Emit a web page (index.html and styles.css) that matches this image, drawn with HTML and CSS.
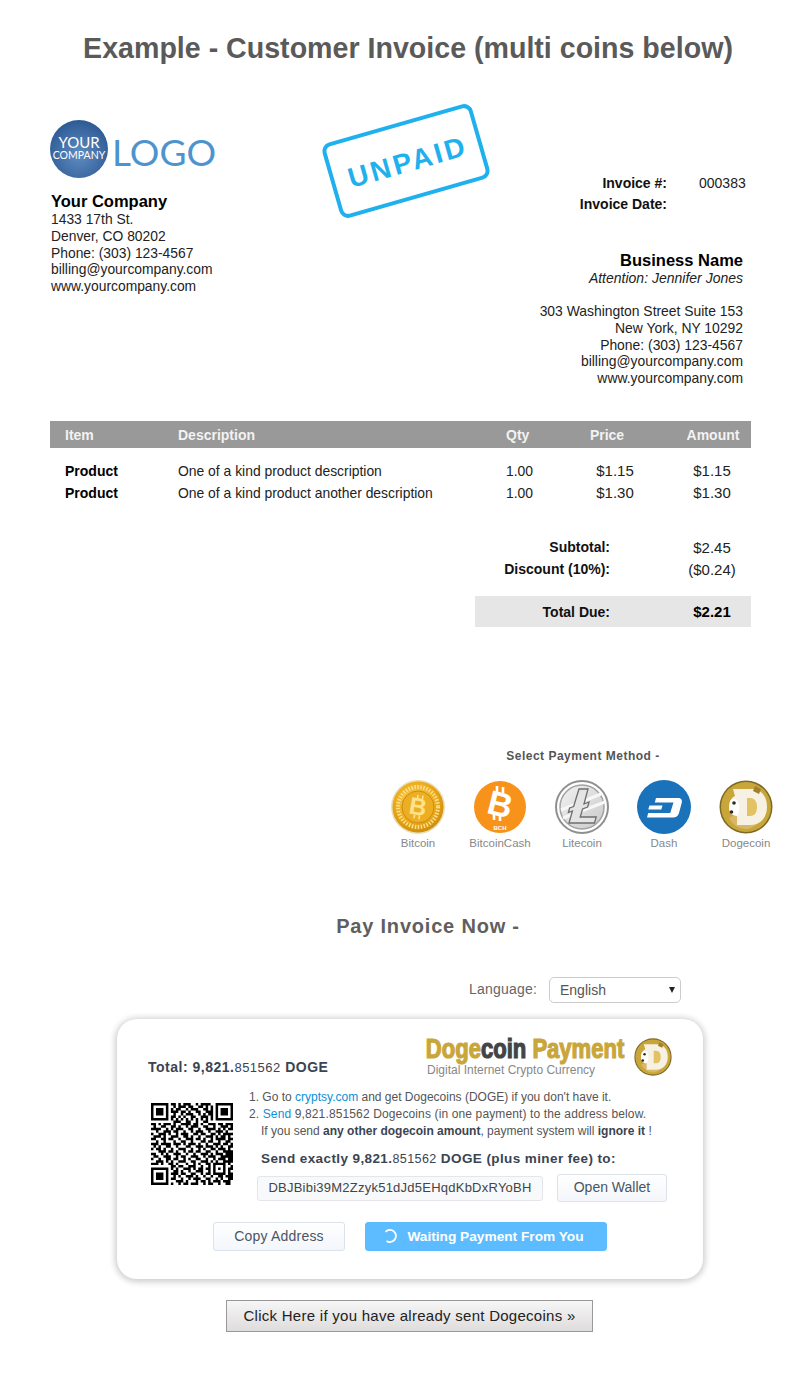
FILE: index.html
```html
<!DOCTYPE html>
<html lang="en">
  <head>
    <meta charset="UTF-8" />
    <title>Example - Customer Invoice</title>
    <link rel="stylesheet" href="styles.css">
  </head>
  <body>
    <svg class="defs" width="0" height="0">
      <defs>
        <radialGradient id="goldFill" cx="45%" cy="40%" r="65%">
          <stop offset="0" stop-color="#fbd566" />
          <stop offset="0.6" stop-color="#eeab1c" />
          <stop offset="1" stop-color="#c98608" />
        </radialGradient>
        <linearGradient id="silverFill" x1="0" y1="0" x2="1" y2="1">
          <stop offset="0" stop-color="#f2f2f2" />
          <stop offset="1" stop-color="#c9c9c9" />
        </linearGradient>
        <radialGradient id="logoFill" cx="50%" cy="60%" r="60%">
          <stop offset="0" stop-color="#5f8cc0" />
          <stop offset="1" stop-color="#2d5a94" />
        </radialGradient>
        <symbol id="dogeCoin" viewBox="0 0 54 54">
          <circle cx="27" cy="27" r="26.5" fill="#7d6a26" />
          <circle cx="27" cy="27" r="25" fill="#c9a63a" />
          <path d="M10 38c6-4 10-2 14-3s14-2 20-3c-2 9-9 17-17 17-7 0-13-4-17-11z" fill="#d8b768" />
          <path d="M14 9h18c11 0 16 8 16 18s-6 18-16 18h-14v-10c-4-1-7-4-7-9s2-9 5-10z" fill="#f6f1e2" />
          <path d="M28 18h3c5 0 7 4 7 9s-2 9-7 9h-3z" fill="#e3c266" />
          <path d="M13 19c3-1 6 1 7 5s0 9-2 12c-4 0-8-3-8-8s1-8 3-9z" fill="#fff" />
          <circle cx="15" cy="23" r="1.800" fill="#2e2a1e" />
          <circle cx="12.500" cy="32" r="1.800" fill="#2e2a1e" />
          <path d="M36 6l6 3-2 5-6-3z" fill="#a0802a" />
        </symbol>
      </defs>
    </svg>

    <h1 class="page-title">Example - Customer Invoice (multi coins below)</h1>

    <section class="invoice">
      <div class="invoice-head">
        <div class="company">
          <svg class="company-logo" width="170" height="60" viewBox="0 0 170 60">
            <circle cx="29" cy="29" r="29" fill="url(#logoFill)" />
            <text x="29" y="28" text-anchor="middle" class="logo-your">YOUR</text>
            <text x="29" y="39" text-anchor="middle" class="logo-company">COMPANY</text>
            <text x="62" y="46" class="logo-word">LOGO</text>
          </svg>
          <div class="company-name">Your Company</div>
          <div class="company-lines">
            1433 17th St.<br />
            Denver, CO 80202<br />
            Phone: (303) 123-4567<br />
            billing@yourcompany.com<br />
            www.yourcompany.com
          </div>
        </div>

        <svg class="stamp" width="170" height="116" viewBox="0 0 170 116">
          <g transform="rotate(-16 85 58)">
            <rect x="9" y="21" width="152" height="74" rx="7" fill="none" stroke="#1fb0ee" stroke-width="4" />
            <text x="85" y="69" text-anchor="middle" textLength="120" class="stamp-text">UNPAID</text>
          </g>
        </svg>

        <div class="bill-to">
          <div class="invoice-meta">
            <b>Invoice #:</b><span>000383</span>
            <b>Invoice Date:</b><span></span>
          </div>
          <div class="business-name">Business Name</div>
          <div class="attention">Attention: Jennifer Jones</div>
          <div class="business-lines">
            303 Washington Street Suite 153<br />
            New York, NY 10292<br />
            Phone: (303) 123-4567<br />
            billing@yourcompany.com<br />
            www.yourcompany.com
          </div>
        </div>
      </div>

      <table class="items">
        <thead>
          <tr>
            <th class="col-item">Item</th>
            <th class="col-desc">Description</th>
            <th class="col-qty">Qty</th>
            <th class="col-price">Price</th>
            <th class="col-amount">Amount</th>
          </tr>
        </thead>
        <tbody>
          <tr class="first-row">
            <td class="col-item">Product</td>
            <td class="col-desc">One of a kind product description</td>
            <td class="col-qty">1.00</td>
            <td class="col-price">$1.15</td>
            <td class="col-amount">$1.15</td>
          </tr>
          <tr>
            <td class="col-item">Product</td>
            <td class="col-desc">One of a kind product another description</td>
            <td class="col-qty">1.00</td>
            <td class="col-price">$1.30</td>
            <td class="col-amount">$1.30</td>
          </tr>
        </tbody>
      </table>

      <div class="totals">
        <div class="total-row"><b>Subtotal:</b><span>$2.45</span></div>
        <div class="total-row"><b>Discount (10%):</b><span>($0.24)</span></div>
        <div class="total-row total-due"><b>Total Due:</b><b>$2.21</b></div>
      </div>
    </section>

    <section class="payment-methods">
      <div class="payment-title">Select Payment Method -</div>
      <div class="coin-list">
        <div class="coin">
          <svg width="54" height="54" viewBox="0 0 54 54">
            <circle cx="27" cy="27" r="27" fill="#e8ddb0" />
            <circle cx="27" cy="27" r="25.5" fill="url(#goldFill)" />
            <circle cx="27" cy="27" r="20" fill="none" stroke="#fbe08a" stroke-width="4" stroke-dasharray="1.5 1.5" />
            <circle cx="27" cy="27" r="16" fill="#eeae24" stroke="#c98d12" />
            <text x="27" y="35" text-anchor="middle" transform="rotate(10 27 27)" class="coin-b btc-b">B</text>
            <path d="M25 15v4M30 15v4M25 35v4M30 35v4" stroke="#ffe28c" stroke-width="1.6" transform="rotate(10 27 27)" />
          </svg>
          <span>Bitcoin</span>
        </div>
        <div class="coin">
          <svg width="54" height="54" viewBox="0 0 54 54">
            <circle cx="27" cy="27" r="26" fill="#f7931a" />
            <text x="27" y="36" text-anchor="middle" transform="rotate(14 27 25)" class="coin-b bch-b">B</text>
            <path d="M24 6v6M30 7v6M21 34v6M27 35v6" stroke="#fff" stroke-width="2.6" />
            <text x="27" y="50" text-anchor="middle" class="bch-text">BCH</text>
          </svg>
          <span>BitcoinCash</span>
        </div>
        <div class="coin">
          <svg width="54" height="54" viewBox="0 0 54 54">
            <circle cx="27" cy="27" r="26" fill="#fff" stroke="#8f8f8f" stroke-width="2" />
            <circle cx="27" cy="27" r="22" fill="url(#silverFill)" stroke="#a2a2a2" stroke-width="1.5" />
            <path d="M6 30L46 14M8 38L50 22" stroke="#f7f7f7" stroke-width="3" />
            <path d="M24 9h9l-4 15 5-2-1.400 5-5 2-2.400 8h16l-1.700 6H14l3.400-12-4 1.500 1.200-4.500 4-1.500z" fill="#e4e4e4" stroke="#6e6e6e" stroke-width="1.300" />
          </svg>
          <span>Litecoin</span>
        </div>
        <div class="coin">
          <svg width="54" height="54" viewBox="0 0 54 54">
            <circle cx="27" cy="27" r="27" fill="#1a72bb" />
            <path d="M19 18h22c3 0 4.500 2 3.800 4.600l-2.800 10.300c-.8 3-3.200 4.600-6 4.600H10l1.200-4.400h22l3.300-10.700H17.800z" fill="#fff" />
            <path d="M12.500 25.500h13l-1.200 4H11.300z" fill="#fff" />
          </svg>
          <span>Dash</span>
        </div>
        <div class="coin">
          <svg width="54" height="54"><use href="#dogeCoin" /></svg>
          <span>Dogecoin</span>
        </div>
      </div>
    </section>

    <h2 class="pay-title">Pay Invoice Now -</h2>

    <div class="language-row">
      <label for="language">Language:</label>
      <div class="language-select">
        <select id="language">
          <option>English</option>
        </select>
      </div>
    </div>

    <section class="pay-card">
      <div class="card-head">
        <div class="card-total">Total: 9,821.<span class="light">851562</span> DOGE</div>
        <div class="card-brand">
          <div class="brand-text">
            <svg class="brand-word" width="201" height="34" viewBox="0 0 246 34" preserveAspectRatio="none">
              <text x="1" y="26" class="brand-svg-text">Doge<tspan class="brand-dark">coin</tspan> Payment</text>
            </svg>
            <div class="brand-sub">Digital Internet Crypto Currency</div>
          </div>
          <svg width="38" height="38"><use href="#dogeCoin" /></svg>
        </div>
      </div>

      <div class="card-body">
        <svg class="qr" width="82" height="82" viewBox="0 0 33 33">
          <path stroke="#000" stroke-width="1" fill="none" d="
            M0 .5h7M8 .5h2M11 .5h1M13 .5h3M18 .5h1M20 .5h4M26 .5h7
            M0 1.500h1M6 1.500h1M9 1.500h1M11 1.500h3M15 1.500h2M19 1.500h2M22 1.500h1M24 1.500h1M26 1.500h1M32 1.500h1
            M0 2.500h1M2 2.500h3M6 2.500h1M8 2.500h1M10 2.500h2M14 2.500h1M16 2.500h3M21 2.500h2M24 2.500h1M26 2.500h1M28 2.500h3M32 2.500h1
            M0 3.500h1M2 3.500h3M6 3.500h1M8 3.500h3M12 3.500h2M15 3.500h1M18 3.500h2M22 3.500h3M26 3.500h1M28 3.500h3M32 3.500h1
            M0 4.500h1M2 4.500h3M6 4.500h1M9 4.500h1M12 4.500h1M14 4.500h3M19 4.500h1M21 4.500h1M23 4.500h2M26 4.500h1M28 4.500h3M32 4.500h1
            M0 5.500h1M6 5.500h1M8 5.500h2M11 5.500h1M13 5.500h1M16 5.500h2M20 5.500h3M24 5.500h1M26 5.500h1M32 5.500h1
            M0 6.500h7M8 6.500h1M10 6.500h1M12 6.500h1M14 6.500h1M16 6.500h1M18 6.500h1M20 6.500h1M22 6.500h1M24 6.500h1M26 6.500h7
            M9 7.500h3M14 7.500h2M18 7.500h1M21 7.500h2
            M0 8.500h2M3 8.500h1M5 8.500h3M9 8.500h1M12 8.500h4M17 8.500h2M20 8.500h1M23 8.500h3M27 8.500h2M30 8.500h3
            M1 9.500h1M4 9.500h2M8 9.500h2M11 9.500h1M14 9.500h1M16 9.500h3M21 9.500h2M25 9.500h1M28 9.500h3M32 9.500h1
            M0 10.500h4M6 10.500h1M8 10.500h1M10 10.500h3M15 10.500h2M19 10.500h1M22 10.500h4M27 10.500h1M29 10.500h1M31 10.500h2
            M2 11.500h1M5 11.500h3M9 11.500h2M13 11.500h1M16 11.500h1M18 11.500h3M23 11.500h1M26 11.500h3M30 11.500h1
            M0 12.500h1M3 12.500h3M7 12.500h1M10 12.500h1M12 12.500h3M17 12.500h2M20 12.500h2M24 12.500h2M27 12.500h1M29 12.500h4
            M1 13.500h3M5 13.500h1M8 13.500h3M13 13.500h2M16 13.500h1M19 13.500h1M22 13.500h3M26 13.500h1M28 13.500h2M31 13.500h1
            M0 14.500h2M4 14.500h2M7 14.500h2M11 14.500h1M14 14.500h3M18 14.500h2M21 14.500h1M24 14.500h1M26 14.500h4M31 14.500h2
            M2 15.500h1M5 15.500h1M9 15.500h1M12 15.500h2M16 15.500h1M20 15.500h2M23 15.500h2M27 15.500h1M30 15.500h2
            M0 16.500h3M4 16.500h4M9 16.500h3M13 16.500h1M15 16.500h3M19 16.500h1M22 16.500h1M25 16.500h3M29 16.500h2M32 16.500h1
            M1 17.500h1M3 17.500h1M6 17.500h2M10 17.500h1M14 17.500h2M18 17.500h3M22 17.500h3M26 17.500h1M28 17.500h1M31 17.500h2
            M0 18.500h1M2 18.500h2M5 18.500h1M8 18.500h1M11 18.500h3M16 18.500h1M19 18.500h1M21 18.500h1M24 18.500h2M27 18.500h3M31 18.500h1
            M3 19.500h3M7 19.500h2M10 19.500h1M13 19.500h1M15 19.500h2M18 19.500h2M22 19.500h2M26 19.500h1M29 19.500h4
            M0 20.500h2M4 20.500h1M6 20.500h1M9 20.500h3M14 20.500h1M17 20.500h1M20 20.500h3M24 20.500h1M26 20.500h3M30 20.500h3
            M1 21.500h2M5 21.500h3M10 21.500h1M12 21.500h2M16 21.500h3M21 21.500h1M23 21.500h3M28 21.500h5
            M0 22.500h1M3 22.500h1M6 22.500h2M9 22.500h2M13 22.500h1M15 22.500h1M18 22.500h2M22 22.500h1M25 22.500h1M27 22.500h3M31 22.500h2
            M2 23.500h3M6 23.500h1M8 23.500h1M11 23.500h3M16 23.500h2M20 23.500h3M24 23.500h1M26 23.500h1M29 23.500h4
            M0 24.500h3M4 24.500h1M7 24.500h2M10 24.500h1M14 24.500h1M17 24.500h1M19 24.500h1M22 24.500h2M25 24.500h5M31 24.500h1
            M8 25.500h2M11 25.500h2M15 25.500h3M20 25.500h1M23 25.500h1M25 25.500h1M29 25.500h1M32 25.500h1
            M0 26.500h7M8 26.500h1M10 26.500h1M13 26.500h3M17 26.500h1M19 26.500h2M22 26.500h2M25 26.500h1M27 26.500h1M29 26.500h1M31 26.500h2
            M0 27.500h1M6 27.500h1M9 27.500h2M12 27.500h1M15 27.500h1M18 27.500h3M23 27.500h1M25 27.500h1M29 27.500h1M31 27.500h1
            M0 28.500h1M2 28.500h3M6 28.500h1M8 28.500h3M12 28.500h2M16 28.500h2M20 28.500h1M22 28.500h2M25 28.500h5M31 28.500h2
            M0 29.500h1M2 29.500h3M6 29.500h1M9 29.500h1M11 29.500h1M14 29.500h3M18 29.500h1M21 29.500h1M24 29.500h1M27 29.500h2M30 29.500h3
            M0 30.500h1M2 30.500h3M6 30.500h1M8 30.500h2M12 30.500h1M15 30.500h1M17 30.500h3M22 30.500h2M26 30.500h1M28 30.500h1M31 30.500h2
            M0 31.500h1M6 31.500h1M10 31.500h3M14 31.500h1M18 31.500h1M20 31.500h2M23 31.500h1M25 31.500h3M29 31.500h3
            M0 32.500h7M8 32.500h1M11 32.500h1M13 32.500h2M16 32.500h3M21 32.500h1M23 32.500h2M27 32.500h1M30 32.500h2" />
        </svg>

        <div class="card-details">
          <ol class="steps">
            <li>1. Go to <a href="#">cryptsy.com</a> and get Dogecoins (DOGE) if you don't have it.</li>
            <li class="steps-wide">2. <a href="#">Send</a> 9,821.851562 Dogecoins (in one payment) to the address below.</li>
            <li class="steps-note">If you send <b>any other dogecoin amount</b>, payment system will <b>ignore it</b> !</li>
          </ol>
          <div class="send-exact">Send exactly 9,821.<span class="light">851562</span> DOGE (plus miner fee) to:</div>
          <div class="address-row">
            <div class="address-box">DBJBibi39M2Zzyk51dJd5EHqdKbDxRYoBH</div>
            <button class="btn btn-wallet">Open Wallet</button>
          </div>
        </div>
      </div>

      <div class="card-actions">
        <button class="btn btn-copy">Copy Address</button>
        <button class="btn btn-waiting">
          <svg width="14" height="14" viewBox="0 0 14 14">
            <path d="M2.600 2.800A6 6 0 1 1 3.500 11.900" fill="none" stroke="#fff" stroke-width="1.800" />
          </svg>
          Waiting Payment From You
        </button>
      </div>
    </section>

    <button class="already-sent">Click Here if you have already sent Dogecoins »</button>
  </body>
</html>
```

FILE: styles.css
```css
* {
  margin: 0;
  padding: 0;
  box-sizing: border-box;
}

body {
  background: #fff;
  color: #111;
  font-family: "Liberation Sans", Arial, sans-serif;
  font-size: 14px;
}

.defs {
  display: block;
  height: 0;
}

.page-title {
  padding: 30px 0 0 16px;
  color: #5a5a5a;
  font-size: 28.600px;
  line-height: 36px;
  text-align: center;
}

/* invoice */
.invoice {
  margin-top: 37px;
  padding: 0 49px 0 50px;
}

.invoice-head {
  display: flex;
  height: 318px;
}

.company {
  flex: none;
  width: 272px;
  padding-top: 17px;
}

.company-logo {
  display: block;
}

.logo-your {
  fill: #fff;
  font-family: "Lato", sans-serif;
  font-size: 15px;
}

.logo-company {
  fill: #fff;
  font-family: "Lato", sans-serif;
  font-size: 10.500px;
}

.logo-word {
  fill: #4d94cf;
  font-family: "Lato", sans-serif;
  font-size: 37px;
}

.company-name {
  margin-top: 11px;
  padding-left: 1px;
  color: #000;
  font-size: 16.500px;
  font-weight: bold;
  line-height: 20px;
}

.company-lines {
  padding-left: 1px;
  color: #222;
  font-size: 13.850px;
  line-height: 16.800px;
}

.stamp {
  flex: none;
  display: block;
  margin-left: -1px;
}

.stamp-text {
  fill: #1fb0ee;
  font-size: 28px;
  font-weight: bold;
}

.bill-to {
  flex: 1;
  min-width: 0;
  padding: 70px 8px 0 0;
  text-align: right;
}

.invoice-meta {
  display: grid;
  grid-template-columns: 176px 47px;
  column-gap: 32px;
  line-height: 21px;
  margin-bottom: 35px;
}

.invoice-meta span {
  color: #222;
  text-align: left;
}

.business-name {
  color: #000;
  font-size: 16.500px;
  font-weight: bold;
  line-height: 20px;
}

.attention {
  color: #222;
  font-size: 14px;
  font-style: italic;
  line-height: 16px;
}

.business-lines {
  margin-top: 17px;
  color: #222;
  font-size: 13.900px;
  line-height: 16.800px;
}

/* line items */
.items {
  width: 701px;
  border-collapse: collapse;
  table-layout: fixed;
}

.items th {
  height: 27px;
  background: #999;
  color: #f2f2f2;
  font-size: 14px;
  font-weight: bold;
  text-align: left;
}

.items td {
  color: #222;
  font-size: 13.900px;
  line-height: 22px;
}

.items .first-row td {
  padding-top: 12px;
}

.col-item {
  width: 128px;
  padding-left: 15px;
}

.items td.col-item {
  color: #000;
  font-size: 14px;
  font-weight: bold;
}

.col-desc {
  width: 328px;
}

.col-qty {
  width: 62px;
}

.col-price {
  width: 94px;
}

.items th.col-price {
  padding-right: 16px;
  text-align: center;
}

.col-amount {
  width: 89px;
  padding-left: 11px;
}

.items th.col-amount {
  padding-left: 13px;
  text-align: center;
}

.items td.col-price,
.items td.col-amount {
  font-size: 15px;
  text-align: center;
}

.totals {
  width: 276px;
  margin: 32px 0 0 425px;
}

.total-row {
  display: grid;
  grid-template-columns: 135px 1fr;
  align-items: center;
  height: 22px;
}

.total-row b:first-child {
  color: #111;
  text-align: right;
}

.total-row span,
.total-row b:last-child {
  padding-left: 63px;
  color: #222;
  font-size: 15px;
  text-align: center;
}

.total-due {
  height: 31px;
  margin-top: 16px;
  background: #e6e6e6;
}

.total-row.total-due b:last-child {
  color: #000;
}

/* coins */
.payment-methods {
  width: 410px;
  margin: 121px 0 0 377px;
}

.payment-title {
  padding-left: 2px;
  color: #555;
  font-size: 12px;
  font-weight: bold;
  letter-spacing: 0.500px;
  line-height: 16px;
  text-align: center;
}

.coin-list {
  display: grid;
  grid-template-columns: repeat(5, 82px);
  margin-top: 16px;
}

.coin {
  text-align: center;
}

.coin svg {
  display: block;
  margin: 0 auto 2px;
}

.coin span {
  display: block;
  color: #888;
  font-size: 11.500px;
  line-height: 14px;
}

.coin-b {
  font-weight: bold;
}

.btc-b {
  fill: #ffe28c;
  font-size: 24px;
}

.bch-b {
  fill: #fff;
  font-size: 34px;
}

.bch-text {
  fill: #fff;
  font-size: 6px;
  font-weight: bold;
}

/* pay box */
.pay-title {
  margin-top: 64px;
  padding-left: 56px;
  color: #5f5f5f;
  font-size: 20px;
  letter-spacing: 0.800px;
  line-height: 24px;
  text-align: center;
}

.language-row {
  display: flex;
  justify-content: flex-end;
  align-items: center;
  gap: 12px;
  margin-top: 39px;
  padding-right: 119px;
  color: #666;
}

.language-row label {
  padding-bottom: 2px;
  letter-spacing: 0.200px;
}

.language-select {
  position: relative;
  width: 132px;
}

.language-select select {
  appearance: none;
  display: block;
  width: 100%;
  height: 26px;
  padding-left: 10px;
  background: #fff;
  border: 1px solid #ccc;
  border-radius: 5px;
  color: #555;
  font-family: inherit;
  font-size: 14px;
}

.language-select::after {
  content: "";
  position: absolute;
  top: 10px;
  right: 6px;
  border-top: 6px solid #222;
  border-left: 3.500px solid transparent;
  border-right: 3.500px solid transparent;
}

.pay-card {
  width: 586px;
  height: 260px;
  margin: 16px 0 0 117px;
  padding-top: 17px;
  background: #fff;
  border-radius: 20px;
  box-shadow: 0 1px 6px 2px rgba(0, 0, 0, 0.2);
}

.light {
  font-size: 0.930em;
  font-weight: normal;
}

.card-head {
  display: flex;
  justify-content: space-between;
  align-items: flex-end;
  height: 42px;
  padding: 0 31px;
}

.card-total {
  margin-bottom: 1px;
  color: #3b4452;
  font-size: 14px;
  font-weight: bold;
  letter-spacing: 0.500px;
  line-height: 18px;
}

.card-brand {
  display: flex;
  align-items: center;
  gap: 8px;
}

.brand-word {
  display: block;
  margin: -4px 0;
}

.brand-svg-text {
  fill: #c9a63a;
  stroke: #c9a63a;
  stroke-width: 1.200px;
  font-size: 27px;
  font-weight: bold;
}

.brand-dark {
  fill: #444;
  stroke: #444;
}

.brand-sub {
  padding-left: 2px;
  color: #888;
  font-size: 12px;
  line-height: 16px;
}

.card-body {
  display: flex;
  align-items: flex-start;
  gap: 16px;
  margin-top: 10.500px;
  padding-left: 34px;
}

.qr {
  display: block;
  flex: none;
  margin-top: 14px;
}

.steps {
  list-style: none;
  color: #555;
  font-size: 12px;
  line-height: 17px;
}

.steps a {
  color: #0a8fd6;
  text-decoration: none;
}

.steps b {
  color: #3b4452;
}

.steps-wide {
  letter-spacing: 0.130px;
}

.steps-note {
  padding-left: 12px;
}

.send-exact {
  margin-top: 10px;
  padding-left: 12px;
  color: #3b4452;
  font-size: 13.500px;
  font-weight: bold;
  letter-spacing: 0.400px;
  line-height: 18px;
}

.address-row {
  display: flex;
  align-items: center;
  gap: 14px;
  margin: 6.500px 0 0 8px;
}

.address-box {
  width: 286px;
  height: 25px;
  background: #f8f9fa;
  border: 1px solid #e3e6ea;
  border-radius: 3px;
  color: #444;
  font-size: 13px;
  letter-spacing: 0.240px;
  line-height: 22px;
  text-align: center;
}

.btn {
  padding-bottom: 2px;
  border: 1px solid #dde3ea;
  border-radius: 3px;
  background: linear-gradient(#fff, #f3f6fb);
  color: #4a5563;
  font-family: inherit;
  font-size: 14px;
}

.btn-wallet {
  width: 110px;
  height: 28px;
}

.card-actions {
  display: flex;
  gap: 20px;
  margin-top: 20px;
  padding-left: 96px;
}

.btn-copy {
  width: 132px;
  height: 29px;
  letter-spacing: 0.200px;
}

.btn-waiting {
  display: flex;
  justify-content: center;
  align-items: center;
  gap: 10px;
  width: 242px;
  height: 29px;
  padding: 0 5px 1px 0;
  background: #5cbcff;
  border-color: #5cbcff;
  color: #fff;
  font-size: 13.700px;
  font-weight: bold;
}

.already-sent {
  display: block;
  width: 367px;
  height: 32px;
  margin: 21px 0 0 226px;
  padding-bottom: 2px;
  border: 1px solid #999;
  background: linear-gradient(#f6f6f6, #dfdcdc);
  color: #222;
  font-family: inherit;
  font-size: 15px;
  letter-spacing: 0.270px;
}
```
